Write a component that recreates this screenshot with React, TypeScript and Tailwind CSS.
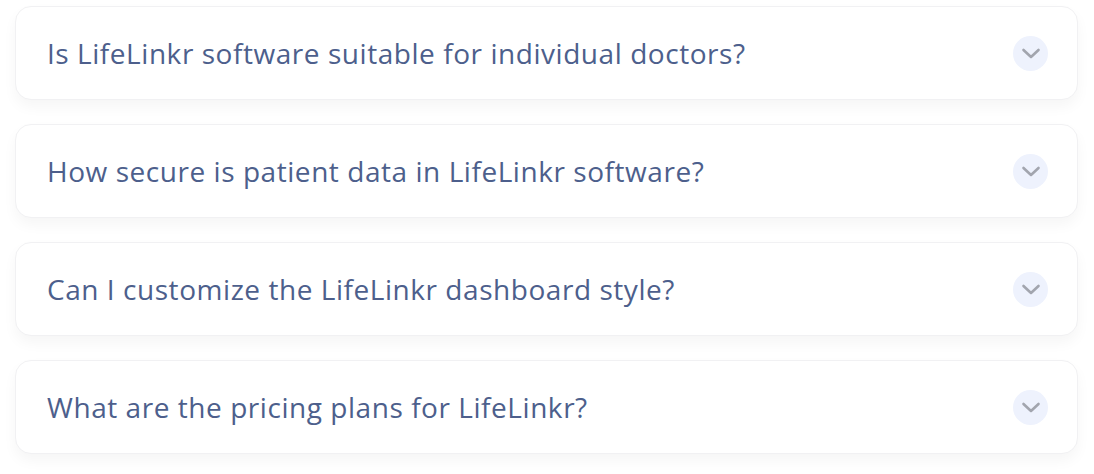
import React from "react";

const items = [
  "Is LifeLinkr software suitable for individual doctors?",
  "How secure is patient data in LifeLinkr software?",
  "Can I customize the LifeLinkr dashboard style?",
  "What are the pricing plans for LifeLinkr?",
];

export default function App() {
  return (
    <div className="w-[1094px] h-[474px] bg-white pt-[6px] pl-[15px]" style={{ fontFamily: '"Open Sans", "Noto Sans", sans-serif' }}>
      <div className="flex flex-col gap-[24px] w-[1063px]">
        {items.map((q) => (
          <div
            key={q}
            className="h-[94px] rounded-[16px] bg-white border border-[#f1f1f3] shadow-[0_7px_14px_rgba(0,0,0,0.04)] flex items-center justify-between pl-[31px] pr-[29px]"
          >
            <span className="text-[28px] font-medium text-[#4d5f8c] tracking-[0.55px]">{q}</span>
            <div className="w-[35px] h-[35px] rounded-full bg-[#eef2fd] flex items-center justify-center">
              <svg width="20" height="20" viewBox="0 0 20 20" fill="none" stroke="#a2a5ae" strokeWidth="2.6" strokeLinecap="round" strokeLinejoin="round">
                <path d="M2.5 7l7.5 7 7.5-7" />
              </svg>
            </div>
          </div>
        ))}
      </div>
    </div>
  );
}
